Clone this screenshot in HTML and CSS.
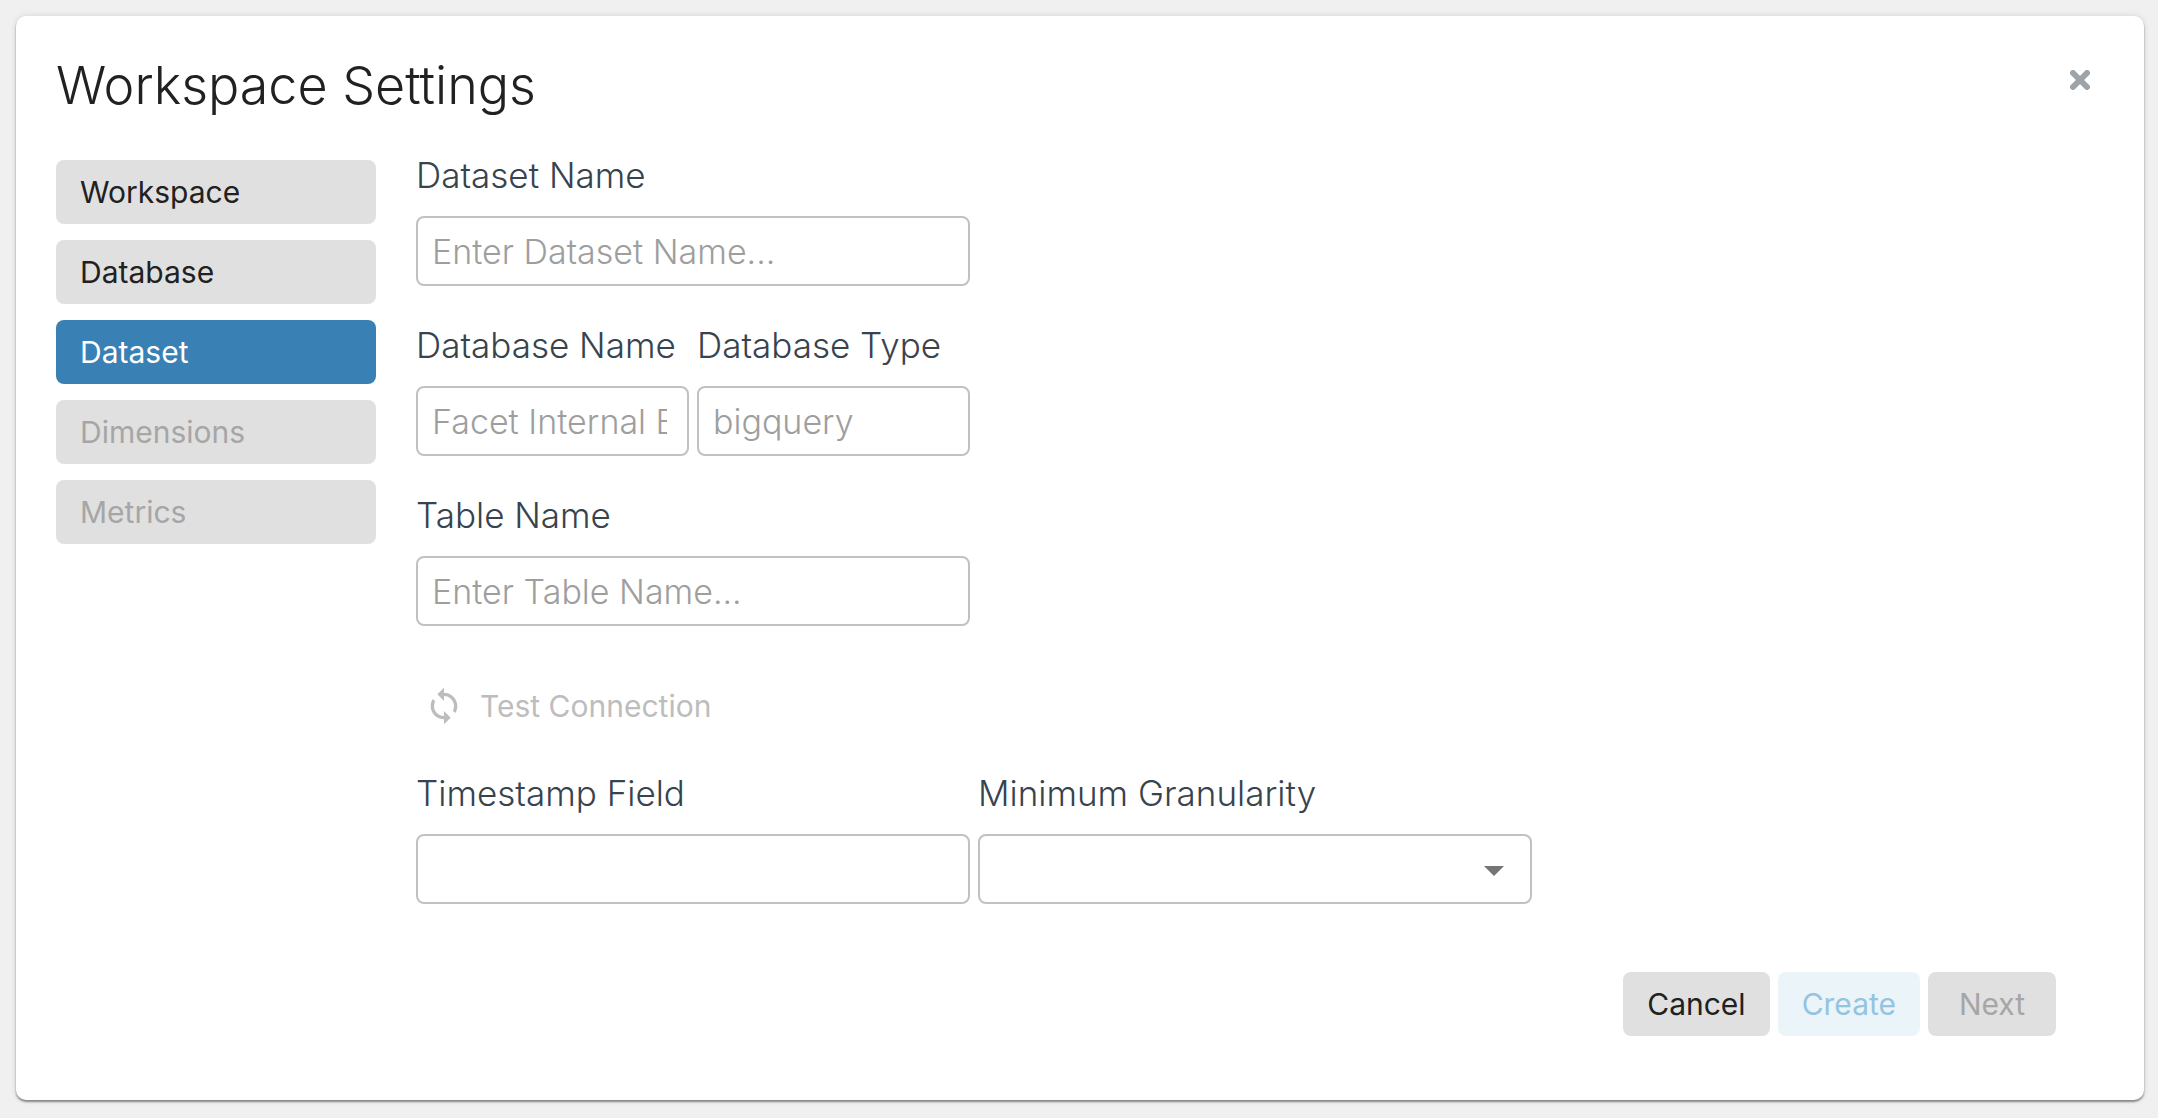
FILE: index.html
```html
<!DOCTYPE html>
<html lang="en">
<head>
    <meta charset="UTF-8">
    <meta name="viewport" content="width=device-width, initial-scale=1.0">
    <title>Workspace Settings</title>
    <link rel="stylesheet" href="styles.css">
</head>
<body>
    <div class="modal">
        <header class="modal-header">
            <h1 class="title">Workspace Settings</h1>
            <button type="button" class="close" aria-label="Close">
                <svg width="20" height="20" viewBox="0 0 20 20">
                    <path d="M3 3 L17 17 M17 3 L3 17" stroke="#9da3a7" stroke-width="6" stroke-linecap="round"/>
                </svg>
            </button>
        </header>
        <div class="content">
            <nav class="tabs">
                <button type="button" class="button tab">Workspace</button>
                <button type="button" class="button tab">Database</button>
                <button type="button" class="button tab active">Dataset</button>
                <button type="button" class="button tab" disabled>Dimensions</button>
                <button type="button" class="button tab" disabled>Metrics</button>
            </nav>
            <form class="form" id="datasetForm">
                <div class="row">
                    <div class="field">
                        <label class="label" for="datasetName">Dataset Name</label>
                        <input type="text" class="input" id="datasetName" placeholder="Enter Dataset Name...">
                    </div>
                </div>
                <div class="row">
                    <div class="field">
                        <label class="label" for="databaseName">Database Name</label>
                        <input type="text" class="input" id="databaseName" placeholder="Facet Internal BigQuery" disabled>
                    </div>
                    <div class="field">
                        <label class="label" for="databaseType">Database Type</label>
                        <input type="text" class="input" id="databaseType" placeholder="bigquery" disabled>
                    </div>
                </div>
                <div class="row">
                    <div class="field">
                        <label class="label" for="tableName">Table Name</label>
                        <input type="text" class="input" id="tableName" placeholder="Enter Table Name...">
                    </div>
                </div>
                <button type="button" class="test-button" disabled>
                    <svg width="40" height="40" viewBox="0 0 24 24" fill="currentColor">
                        <path d="M12 4V1L8 5l4 4V6c3.31 0 6 2.69 6 6 0 1.01-.25 1.97-.7 2.8l1.46 1.46C19.54 15.03 20 13.57 20 12c0-4.42-3.58-8-8-8zm0 14c-3.31 0-6-2.69-6-6 0-1.01.25-1.97.7-2.8L5.24 7.74C4.46 8.97 4 10.43 4 12c0 4.42 3.58 8 8 8v3l4-4-4-4v3z"/>
                    </svg>
                    Test Connection
                </button>
                <div class="row row-wide">
                    <div class="field">
                        <label class="label" for="timestampField">Timestamp Field</label>
                        <input type="text" class="input" id="timestampField">
                    </div>
                    <div class="field">
                        <label class="label" for="granularity">Minimum Granularity</label>
                        <div class="select-wrap">
                            <select class="input" id="granularity">
                                <option></option>
                            </select>
                            <svg class="caret" width="20" height="10" viewBox="0 0 20 10">
                                <path d="M0 0h20L10 10z" fill="#757575"/>
                            </svg>
                        </div>
                    </div>
                </div>
            </form>
        </div>
        <footer class="actions">
            <button type="button" class="button">Cancel</button>
            <button type="submit" class="button create" form="datasetForm" disabled>Create</button>
            <button type="button" class="button" disabled>Next</button>
        </footer>
    </div>
</body>
</html>
```
FILE: styles.css
```css
* {
    box-sizing: border-box;
}
body {
    font-family: Inter, sans-serif;
    margin: 0;
    padding: 16px 14px 18px 16px;
    background-color: #f0f0f0;
}
.modal {
    background-color: #fff;
    border-radius: 10px;
    box-shadow: 0 2px 2px rgba(0,0,0,0.4), 0 0 6px rgba(0,0,0,0.12);
    padding: 40px 40px 64px;
}
.modal-header {
    display: flex;
    justify-content: space-between;
    align-items: flex-start;
    margin-bottom: 40px;
}
.title {
    margin: 0;
    font-size: 52px;
    line-height: 60px;
    font-weight: 300;
    color: #212121;
}
.close {
    display: flex;
    padding: 14px;
    border: none;
    background: none;
    cursor: pointer;
}
.content {
    display: flex;
    align-items: flex-start;
    gap: 40px;
}
.tabs {
    display: flex;
    flex-direction: column;
    gap: 16px;
    width: 320px;
    padding-top: 4px;
}
.button {
    min-width: 128px;
    height: 64px;
    padding: 0 24px;
    border: none;
    border-radius: 8px;
    background-color: #e0e0e0;
    color: #212121;
    font-family: inherit;
    font-size: 30px;
    font-weight: 400;
    cursor: pointer;
}
.button:disabled {
    color: #a6a6a6;
    cursor: default;
}
.tab {
    text-align: left;
}
.tab.active {
    background-color: #3980b5;
    color: #fff;
}
.form {
    flex: 1;
}
.row {
    display: flex;
    gap: 8px;
    max-width: 554px;
    margin-bottom: 40px;
}
.row-wide {
    max-width: 1116px;
    margin-bottom: 68px;
}
.field {
    flex: 1;
    min-width: 0;
}
.label {
    display: block;
    margin-bottom: 22px;
    font-size: 35px;
    line-height: 38px;
    font-weight: 300;
    color: #37434d;
    white-space: nowrap;
}
.input {
    display: block;
    width: 100%;
    height: 70px;
    padding: 0 20px 0 14px;
    border: 2px solid #c1c1c1;
    border-radius: 8px;
    background-color: #fff;
    color: #37434d;
    font-family: inherit;
    font-size: 34px;
    font-weight: 300;
    appearance: none;
}
.input::placeholder {
    color: #9e9e9e;
}
.select-wrap {
    position: relative;
}
.caret {
    position: absolute;
    right: 28px;
    top: 32px;
    pointer-events: none;
}
.test-button {
    display: flex;
    align-items: center;
    gap: 16px;
    height: 64px;
    margin: 48px 0 36px;
    padding: 0 8px;
    border: none;
    background: none;
    color: #bdbdbd;
    font-family: inherit;
    font-size: 30px;
    font-weight: 400;
}
.actions {
    display: flex;
    justify-content: flex-end;
    gap: 8px;
    padding-right: 48px;
}
.create:disabled {
    background-color: #ebf4f8;
    color: #93c4e0;
}
@media (max-width: 900px) {
    .content {
        flex-direction: column;
    }
    .form {
        width: 100%;
    }
}
```
